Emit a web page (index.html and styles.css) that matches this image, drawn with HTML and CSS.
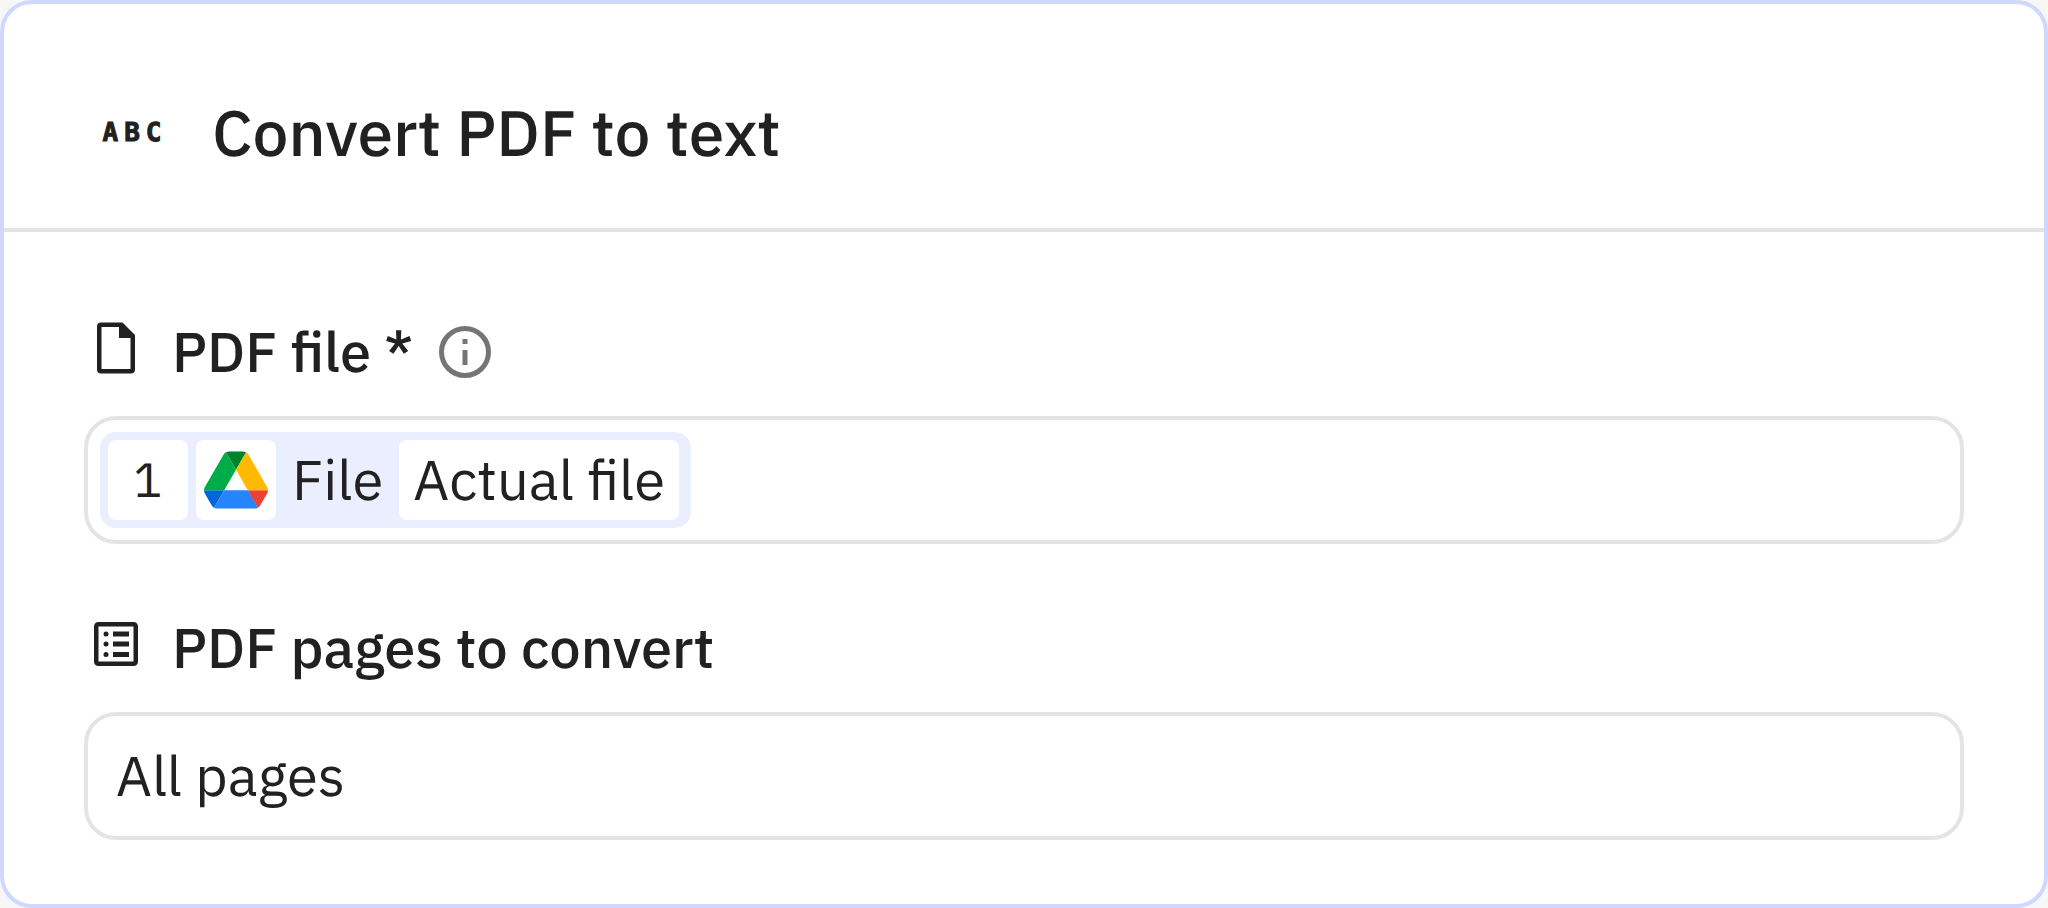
FILE: index.html
```html
<!DOCTYPE html>
<html lang="en">
<head>
<meta charset="utf-8">
<title>Convert PDF to text</title>
<link rel="stylesheet" href="styles.css">
</head>
<body>
<main class="card">
  <header class="card-header">
    <span class="abc-icon" aria-hidden="true"><span>A</span><span>B</span><span>C</span></span>
    <h1 class="card-title">Convert PDF to text</h1>
  </header>
  <form class="card-body">
    <section class="field">
      <div class="field-label">
        <span class="field-icon">
          <svg width="38" height="52" viewBox="0 0 38 52" aria-hidden="true"><path fill="#212121" fill-rule="evenodd" d="M4 .5H25.500L38 13V47.500Q38 51.500 34 51.500H4Q0 51.500 0 47.500V4.500Q0 .5 4 .5ZM4.500 5V47H33.500V16H22V5Z"/></svg>
        </span>
        <span id="file-label">PDF file *</span>
        <button class="info" type="button" aria-label="About PDF file">
          <svg width="52" height="52" viewBox="0 0 52 52" aria-hidden="true"><circle cx="26" cy="26" r="23.5" fill="none" stroke="#757575" stroke-width="5"/><path fill="#757575" d="M23.500 13h5v5h-5zM23.500 24h5v15h-5z"/></svg>
        </button>
      </div>
      <div class="control control-chips" role="group" aria-labelledby="file-label">
        <span class="chip">
          <span class="chip-box chip-step">1</span>
          <span class="chip-box chip-logo">
            <svg width="64" height="58" viewBox="0 0 87.3 78" role="img" aria-label="Google Drive"><path fill="#0066da" d="m6.6 66.85 3.85 6.65c.8 1.4 1.95 2.5 3.3 3.3l13.75-23.8h-27.5c0 1.55.4 3.1 1.2 4.5z"/><path fill="#00ac47" d="m43.65 25-13.75-23.8c-1.35.8-2.5 1.9-3.3 3.3l-25.4 44a9.06 9.06 0 0 0 -1.2 4.5h27.5z"/><path fill="#ea4335" d="m73.55 76.8c1.35-.8 2.5-1.9 3.3-3.3l1.6-2.75 7.65-13.25c.8-1.4 1.2-2.95 1.2-4.5h-27.502l5.852 11.5z"/><path fill="#00832d" d="m43.65 25 13.75-23.8c-1.35-.8-2.9-1.2-4.5-1.2h-18.5c-1.6 0-3.15.45-4.5 1.2z"/><path fill="#2684fc" d="m59.8 53h-32.3l-13.75 23.8c1.35.8 2.9 1.2 4.5 1.2h50.8c1.6 0 3.15-.45 4.5-1.2z"/><path fill="#ffba00" d="m73.4 26.5-12.7-22c-.8-1.4-1.95-2.5-3.3-3.3l-13.75 23.8 16.15 28h27.45c0-1.55-.4-3.1-1.2-4.5z"/></svg>
          </span>
          <span class="chip-name">File</span>
          <span class="chip-box chip-value">Actual file</span>
        </span>
      </div>
    </section>
    <section class="field">
      <div class="field-label">
        <span class="field-icon">
          <svg width="44" height="44" viewBox="0 0 44 44" aria-hidden="true"><rect x="2.25" y="2.25" width="39.500" height="39.500" rx="2" fill="none" stroke="#212121" stroke-width="4.500"/><path fill="#212121" d="M19 9.500h16v5H19zM19 19.500h16v5H19zM19 30h16v5H19z"/><circle cx="12" cy="12" r="2.500" fill="#212121"/><circle cx="12" cy="22" r="2.500" fill="#212121"/><circle cx="12" cy="32.500" r="2.500" fill="#212121"/></svg>
        </span>
        <label for="pages">PDF pages to convert</label>
      </div>
      <input class="control control-text" id="pages" type="text" value="All pages">
    </section>
  </form>
</main>
</body>
</html>
```
FILE: styles.css
```css
* {
  box-sizing: border-box;
}

body {
  margin: 0;
  background: #f7f7f7;
  color: #212121;
  font-family: "IBM Plex Sans", Roboto, sans-serif;
  font-size: 56px;
  line-height: 72px;
  text-rendering: geometricPrecision;
}

.card {
  min-height: 100vh;
  border: 4px solid #d0d8ff;
  border-radius: 32px;
  background: #fff;
}

.card-header {
  display: flex;
  align-items: center;
  gap: 32px;
  padding: 88px 80px 56px;
  border-bottom: 4px solid #e4e4e4;
}

.abc-icon {
  display: flex;
  justify-content: center;
  gap: 6px;
  width: 96px;
  padding-top: 2px;
  font-family: "DejaVu Sans Mono", monospace;
  font-size: 26px;
  font-weight: 700;
  line-height: 32px;
  -webkit-text-stroke: 1px currentColor;
}

.card-title {
  margin: 0;
  font-size: 64px;
  font-weight: 500;
  line-height: 80px;
}

.card-body {
  display: flex;
  flex-direction: column;
  gap: 68px;
  padding: 84px 80px 64px;
}

.field {
  display: flex;
  flex-direction: column;
  gap: 28px;
}

.field-label {
  display: flex;
  align-items: center;
  height: 72px;
  font-weight: 500;
}

.field-icon {
  display: flex;
  justify-content: center;
  width: 64px;
  margin-right: 24px;
  padding-bottom: 8px;
}

.info {
  display: flex;
  margin-left: 26px;
  padding: 0;
  border: 0;
  background: none;
}

.control {
  width: 100%;
  height: 128px;
  border: 4px solid #e4e4e4;
  border-radius: 32px;
  background: #fff;
}

.control-chips {
  display: flex;
  align-items: center;
  padding: 0 12px;
}

.control-text {
  padding: 0 28px;
  color: inherit;
  font: inherit;
  text-rendering: inherit;
}

.chip {
  display: flex;
  align-items: center;
  gap: 8px;
  padding: 8px 12px 8px 8px;
  border-radius: 16px;
  background: #ebeeff;
}

.chip-box {
  display: flex;
  align-items: center;
  justify-content: center;
  height: 80px;
  border-radius: 8px;
  background: #fff;
}

.chip-step {
  width: 80px;
  font-size: 48px;
}

.chip-logo {
  width: 80px;
}

.chip-name {
  padding: 0 8px;
}

.chip-value {
  padding: 0 14px;
}
```
